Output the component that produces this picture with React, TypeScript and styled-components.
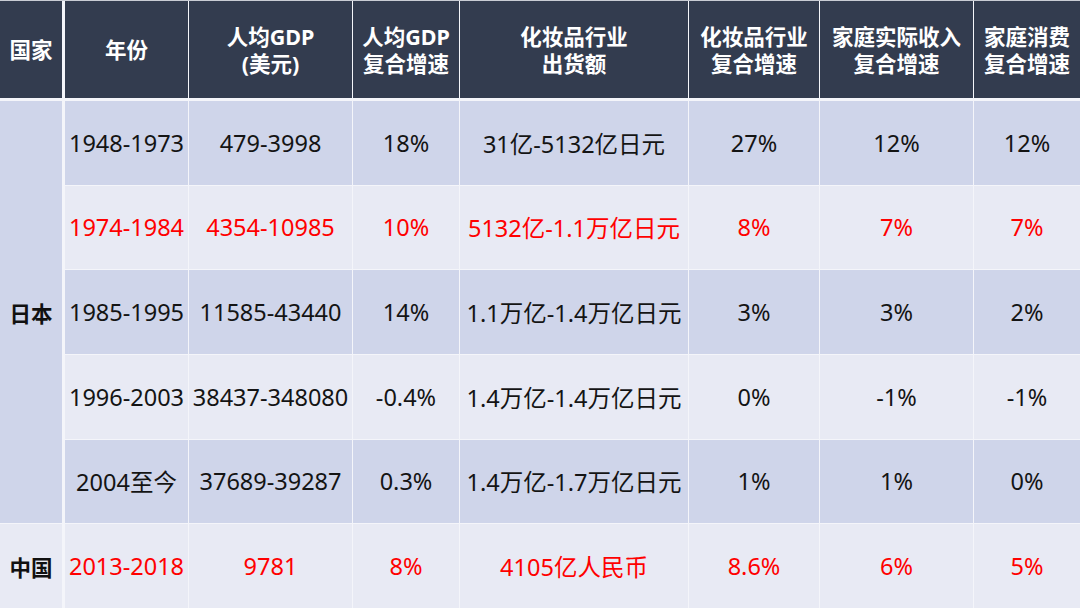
import styled, { createGlobalStyle } from "styled-components";

const GlobalStyle = createGlobalStyle`
  html, body {
    margin: 0;
    padding: 0;
    background: #ffffff;
  }
  body {
    font-family: "Noto Sans", "Noto Sans CJK SC", sans-serif;
  }
`;

const Table = styled.div`
  display: grid;
  width: 1080px;
  height: 608px;
  grid-template-columns: 64px 123px 163px 106px 228px 130px 153px 106px;
  grid-template-rows: 99px repeat(6, 1fr);
  gap: 1px;
  background: #f4f5fa;
  border-top: 1px solid #c9ccd4;
  box-sizing: border-box;
`;

const HeadCell = styled.div<{ $first?: boolean }>`
  background: #333c4f;
  color: #ffffff;
  font-weight: 700;
  font-size: 21.5px;
  display: flex;
  align-items: center;
  justify-content: center;
  text-align: center;
  white-space: nowrap;
  margin-bottom: 2px;
  margin-right: ${(p) => (p.$first ? "2px" : "0")};
`;

const HeadLine = styled.div`
  line-height: 27px;
`;

const CountryCell = styled.div<{ $dark?: boolean; $span: number }>`
  grid-row: span ${(p) => p.$span};
  background: ${(p) => (p.$dark ? "#cfd5ea" : "#e8eaf4")};
  color: #111111;
  font-weight: 700;
  font-size: 21.5px;
  display: flex;
  align-items: center;
  justify-content: center;
  margin-right: 2px;
`;

const Cell = styled.div<{ $dark?: boolean; $red?: boolean }>`
  background: ${(p) => (p.$dark ? "#cfd5ea" : "#e8eaf4")};
  color: ${(p) => (p.$red ? "#ff0000" : "#141414")};
  font-size: 23.5px;
  display: flex;
  align-items: center;
  justify-content: center;
  white-space: nowrap;
`;

const headers: string[][] = [
  ["国家"],
  ["年份"],
  ["人均GDP", "(美元)"],
  ["人均GDP", "复合增速"],
  ["化妆品行业", "出货额"],
  ["化妆品行业", "复合增速"],
  ["家庭实际收入", "复合增速"],
  ["家庭消费", "复合增速"],
];

type Row = { cells: string[]; red?: boolean; dark: boolean };

const japan: Row[] = [
  { cells: ["1948-1973", "479-3998", "18%", "31亿-5132亿日元", "27%", "12%", "12%"], dark: true },
  { cells: ["1974-1984", "4354-10985", "10%", "5132亿-1.1万亿日元", "8%", "7%", "7%"], dark: false, red: true },
  { cells: ["1985-1995", "11585-43440", "14%", "1.1万亿-1.4万亿日元", "3%", "3%", "2%"], dark: true },
  { cells: ["1996-2003", "38437-348080", "-0.4%", "1.4万亿-1.4万亿日元", "0%", "-1%", "-1%"], dark: false },
  { cells: ["2004至今", "37689-39287", "0.3%", "1.4万亿-1.7万亿日元", "1%", "1%", "0%"], dark: true },
];

const china: Row = {
  cells: ["2013-2018", "9781", "8%", "4105亿人民币", "8.6%", "6%", "5%"],
  dark: false,
  red: true,
};

function App() {
  const renderRow = (r: Row, ri: number) =>
    r.cells.map((c, ci) => (
      <Cell key={`${ri}-${ci}`} $dark={r.dark} $red={r.red}>
        {c}
      </Cell>
    ));

  return (
    <>
      <GlobalStyle />
      <Table>
        {headers.map((h, i) => (
          <HeadCell key={i} $first={i === 0}>
            <div>
              {h.map((line, j) => (
                <HeadLine key={j}>{line}</HeadLine>
              ))}
            </div>
          </HeadCell>
        ))}
        <CountryCell $dark $span={5}>
          日本
        </CountryCell>
        {japan.map((r, i) => renderRow(r, i))}
        <CountryCell $span={1}>中国</CountryCell>
        {renderRow(china, 9)}
      </Table>
    </>
  );
}

export default App;
